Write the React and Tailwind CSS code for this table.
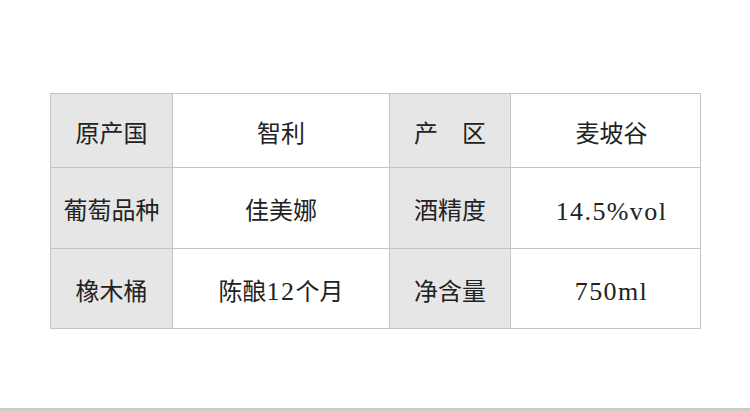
const rows = [
  ['原产国', '智利', '产　区', '麦坡谷', 'h-[74px]'],
  ['葡萄品种', '佳美娜', '酒精度', '14.5%vol', 'h-[81px]'],
  ['橡木桶', '陈酿12个月', '净含量', '750ml', 'h-[80px]'],
];

// latin runs render larger and spaced, like the half-width glyphs of the original font
function Cell({ text }) {
  const parts = text.split(/([0-9A-Za-z.%]+)/).filter(Boolean);
  return parts.map((p, i) =>
    /[0-9A-Za-z]/.test(p) ? (
      <span key={i} className="text-[26px] tracking-[1.4px]">{p}</span>
    ) : (
      <span key={i}>{p}</span>
    )
  );
}

export default function App() {
  return (
    <div className="w-[750px] h-[411px] bg-white flex flex-col font-['Liberation_Serif','Noto_Sans_CJK_SC',serif] text-[#222]">
      <div className="flex-1 pt-[93px] pl-[50px]">
        <table className="border-collapse text-[24px]">
          <colgroup>
            <col className="w-[122px]" />
            <col className="w-[217px]" />
            <col className="w-[121px]" />
            <col className="w-[190px]" />
          </colgroup>
          <tbody>
            {rows.map(([k1, v1, k2, v2, h]) => (
              <tr key={k1} className={h}>
                <td className="border border-[#c4c4c4] bg-[#e6e6e6] text-center align-middle pt-[6px]">{k1}</td>
                <td className="border border-[#c4c4c4] text-center align-middle pt-[6px]"><Cell text={v1} /></td>
                <td className="border border-[#c4c4c4] bg-[#e6e6e6] text-center align-middle pt-[6px]">{k2}</td>
                <td className="border border-[#c4c4c4] text-center align-middle pt-[6px] pl-[12px]"><Cell text={v2} /></td>
              </tr>
            ))}
          </tbody>
        </table>
      </div>
      <div className="h-[3px] bg-[#cccccc]" />
    </div>
  );
}
